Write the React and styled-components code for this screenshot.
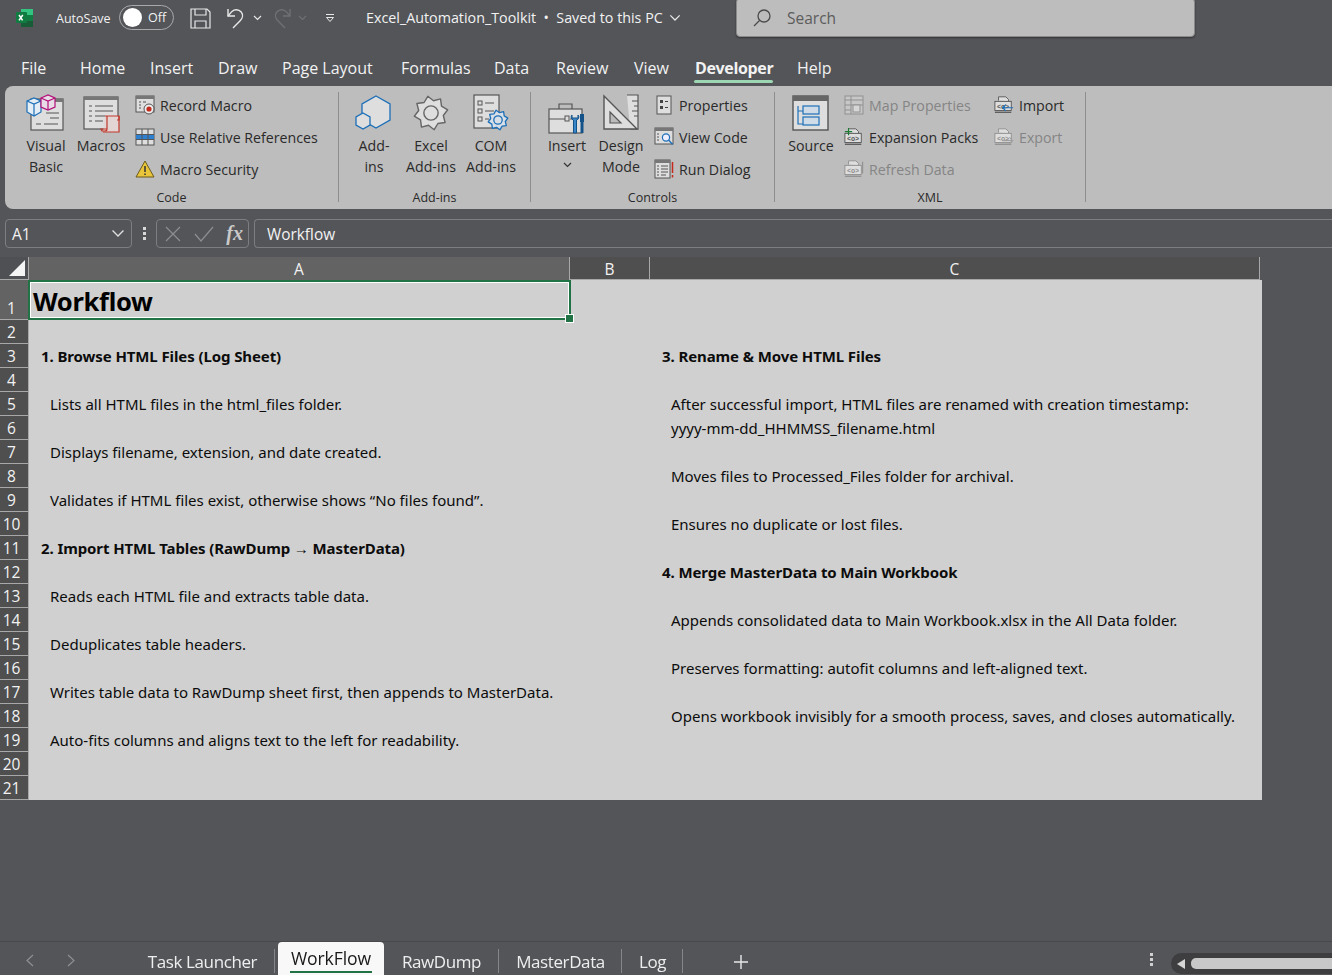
import React from "react";
import styled, { createGlobalStyle } from "styled-components";

const UI = '"Open Sans", "Noto Sans", sans-serif';
const CELL = '"Noto Sans", "Open Sans", sans-serif';

const Global = createGlobalStyle`
  html, body { margin: 0; padding: 0; background: #535559; }
  body { width: 1332px; height: 975px; overflow: hidden; font-family: ${UI}; }
  * { box-sizing: border-box; }
`;

// icons
const Stroke = "#555";
const Fill = "#dedede";
const Blue = "#1c6fb8";

const Svg = ({ s = 16, w, h, children, vb }) => (
  <svg width={w || s} height={h || s} viewBox={vb || `0 0 ${w || s} ${h || s}`} fill="none">
    {children}
  </svg>
);

const ExcelLogo = () => (
  <Svg w={20} h={20}>
    <path d="M6 1h10a2 2 0 0 1 2 2v14a2 2 0 0 1-2 2H6z" fill="#21a366" />
    <rect x="6" y="1" width="12" height="6" fill="#33c481" />
    <rect x="6" y="13" width="12" height="6" fill="#185c37" />
    <rect x="6" y="7" width="12" height="6" fill="#107c41" />
    <rect x="1" y="4" width="11" height="11" rx="1" fill="#107c41" />
    <path d="M4 7l3.6 5.4M7.8 7L4 12.4" stroke="#fff" strokeWidth="1.5" />
  </Svg>
);

const SaveIcon = () => (
  <Svg w={21} h={21}>
    <path d="M1 1h16l3 3v16H1z" stroke="#e8e8e8" strokeWidth="1.2" />
    <path d="M5 1v6h11V1M5 20v-7h11v7" stroke="#e8e8e8" strokeWidth="1.2" />
  </Svg>
);

const UndoIcon = ({ c = "#e8e8e8" }) => (
  <Svg w={20} h={22}>
    <path d="M2 2v7h7" stroke={c} strokeWidth="1.4" />
    <path d="M2 9l4-4.6a6.4 6.4 0 0 1 9 .4c2.6 3 1.4 6.6-.6 8.6L7 21" stroke={c} strokeWidth="1.4" />
  </Svg>
);

const RedoIcon = () => (
  <Svg w={20} h={22}>
    <g transform="translate(20 0) scale(-1 1)">
      <path d="M2 2v7h7" stroke="#6f7074" strokeWidth="1.4" />
      <path d="M2 9l4-4.6a6.4 6.4 0 0 1 9 .4c2.6 3 1.4 6.6-.6 8.6L7 21" stroke="#6f7074" strokeWidth="1.4" />
    </g>
  </Svg>
);

const Chevron = ({ c = "#e8e8e8", s = 9 }) => (
  <Svg w={s} h={s * 0.67} vb="0 0 9 6">
    <path d="M1 1l3.5 3.5L8 1" stroke={c} strokeWidth={9 / s + 0.2} />
  </Svg>
);

const QuickIcon = () => (
  <Svg w={10} h={10}>
    <path d="M1 1.5h8" stroke="#e8e8e8" />
    <path d="M1.5 4.5L5 8.5l3.5-4z" stroke="#e8e8e8" />
  </Svg>
);

const SearchGlass = () => (
  <Svg w={20} h={20}>
    <circle cx="12" cy="8" r="6" stroke="#4a4a4a" strokeWidth="1.3" />
    <path d="M7.5 12.5L2 18" stroke="#4a4a4a" strokeWidth="1.3" />
  </Svg>
);

const VisualBasicIcon = () => (
  <Svg w={40} h={38}>
    <rect x="5" y="5" width="32" height="31" fill={Fill} stroke={Stroke} strokeWidth="1.2" />
    <rect x="5" y="5" width="32" height="3" fill="#777" />
    <path d="M20 19h13M24 24h9M10 30h5M18 30h14" stroke={Stroke} strokeWidth="1.2" />
    <path d="M1 7l7-3 7 3v11l-7 4-7-4z" fill="#e6eef5" stroke={Blue} strokeWidth="1.2" />
    <path d="M1 7l7 3 7-3M8 10v12" stroke={Blue} strokeWidth="1.2" />
    <path d="M15 4l7-3 7 3v9l-7 3-7-3z" fill="#e8dde6" stroke="#b3107a" strokeWidth="1.2" />
    <path d="M15 4l7 3 7-3M22 7v9" stroke="#b3107a" strokeWidth="1.2" />
  </Svg>
);

const MacrosIcon = () => (
  <Svg w={40} h={40}>
    <g transform="translate(2 3)">
      <rect x="1" y="1" width="34" height="32" fill={Fill} stroke={Stroke} strokeWidth="1.2" />
      <rect x="1" y="1" width="34" height="3" fill="#777" />
      <path d="M6 10h3M12 10h18M6 15h3M12 15h18M6 20h3M12 20h10M6 25h3M12 25h8" stroke={Stroke} strokeWidth="1.2" />
      <path d="M22 20h14v16H20" fill="#e4d5d5" stroke="#c0392b" strokeWidth="1.2" />
      <path d="M24 20v13a2 2 0 0 1-2 2h-3l-1-2h6M36 20v4h-2" stroke="#c0392b" strokeWidth="1.2" />
    </g>
  </Svg>
);

const RecordIcon = () => (
  <Svg w={20} h={20}>
    <rect x="1" y="1" width="18" height="16" fill={Fill} stroke={Stroke} />
    <rect x="1" y="1" width="18" height="3" fill="#777" />
    <path d="M4 7h2M4 10h2M4 13h2M8 7h3" stroke={Stroke} />
    <circle cx="14" cy="14" r="5" fill="#eee" stroke={Stroke} />
    <circle cx="14" cy="14" r="2.6" fill="#c42b1c" />
  </Svg>
);

const RelativeIcon = () => (
  <Svg w={20} h={18}>
    <rect x="1" y="1" width="18" height="16" fill={Fill} stroke={Stroke} />
    <rect x="1" y="6.5" width="18" height="5" fill="#2f7fd0" />
    <path d="M7 1v16M13 1v16M1 6.5h18M1 11.5h18" stroke={Stroke} />
  </Svg>
);

const WarningIcon = () => (
  <Svg w={20} h={18}>
    <path d="M10 1l9 16H1z" fill="#e8c53a" stroke="#6b5a1c" />
    <path d="M10 6v6M10 13.5v1.6" stroke="#333" strokeWidth="1.5" />
  </Svg>
);

const AddinsIcon = () => (
  <Svg w={38} h={38}>
    <path d="M21 2l14 8v16l-14 8-14-8V10z" fill="#dedede" stroke={Blue} strokeWidth="1.3" />
    <path d="M8 19l7 4v8l-7 4-7-4v-8z" fill="#dedede" stroke={Blue} strokeWidth="1.3" />
  </Svg>
);

const GearPath = ({ cx, cy, r, color, width = 1.3, fill = Fill }) => {
  const pts = [];
  for (let i = 0; i < 16; i++) {
    const rr = i % 2 === 0 ? r : r * 0.74;
    const a = ((i * 22.5 - 11) * Math.PI) / 180;
    pts.push(`${(cx + rr * Math.cos(a)).toFixed(1)},${(cy + rr * Math.sin(a)).toFixed(1)}`);
  }
  return (
    <>
      <polygon points={pts.join(" ")} fill={fill} stroke={color} strokeWidth={width} strokeLinejoin="round" />
      <circle cx={cx} cy={cy} r={r * 0.42} fill="none" stroke={color} strokeWidth={width} />
    </>
  );
};

const ExcelAddinsIcon = () => (
  <Svg w={38} h={38}>
    <GearPath cx={19} cy={19} r={17} color="#666" width={1.4} />
  </Svg>
);

const ComAddinsIcon = () => (
  <Svg w={36} h={38}>
    <rect x="1" y="1" width="25" height="33" fill={Fill} stroke={Stroke} strokeWidth="1.2" />
    <rect x="5" y="7" width="4" height="4" stroke={Stroke} />
    <rect x="5" y="15" width="4" height="4" stroke={Stroke} />
    <rect x="5" y="23" width="4" height="4" stroke={Stroke} />
    <path d="M12 9h9M12 17h9M12 25h4" stroke={Stroke} />
    <GearPath cx={25} cy={26} r={10} color={Blue} width={1.3} fill="#d8dfe6" />
  </Svg>
);

const InsertIcon = () => (
  <Svg w={38} h={42}>
    <g transform="translate(0 9)">
      <rect x="1" y="8" width="33" height="24" fill={Fill} stroke={Stroke} strokeWidth="1.2" />
      <path d="M11 8V3h13v5" stroke={Stroke} strokeWidth="1.2" />
      <path d="M1 18h16M22 18h3" stroke={Stroke} />
      <rect x="17" y="15" width="4" height="5" fill={Fill} stroke={Stroke} />
      <path d="M24 14a3 3 0 0 0 1.5 5v13h3V19a3 3 0 0 0 1.5-5v3h-6z" fill="#3a86c8" stroke="#14538a" />
      <rect x="32" y="13" width="4" height="8" fill="#14538a" />
      <path d="M34 21v11" stroke="#14538a" strokeWidth="3" />
    </g>
  </Svg>
);

const DesignIcon = () => (
  <Svg w={36} h={38}>
    <path d="M24 1h11v34h-8" fill={Fill} stroke={Stroke} strokeWidth="1.2" />
    <path d="M29 7h6M31 12h4M29 17h6M31 22h4" stroke={Stroke} />
    <path d="M1 2l33 33H1z" fill={Fill} stroke={Stroke} strokeWidth="1.4" />
    <path d="M7 18l11 11H7z" fill="#bbb" stroke={Stroke} strokeWidth="1.2" />
  </Svg>
);

const PropertiesIcon = () => (
  <Svg w={16} h={20}>
    <rect x="1" y="1" width="14" height="18" fill={Fill} stroke={Stroke} />
    <rect x="4" y="5" width="3" height="3" fill="#444" />
    <rect x="4" y="11" width="3" height="3" fill="#444" />
    <path d="M9 6.5h3M9 12.5h3" stroke="#444" />
  </Svg>
);

const ViewCodeIcon = () => (
  <Svg w={20} h={20}>
    <rect x="1" y="1" width="18" height="16" fill={Fill} stroke={Stroke} />
    <rect x="1" y="1" width="18" height="3" fill="#777" />
    <path d="M3 7h2M3 10h2M3 13h2" stroke={Stroke} />
    <circle cx="12" cy="10.5" r="3.6" fill="#eef" stroke={Blue} strokeWidth="1.2" />
    <path d="M14.6 13l4 4.5" stroke={Blue} strokeWidth="1.4" />
  </Svg>
);

const RunDialogIcon = () => (
  <Svg w={20} h={20}>
    <rect x="1" y="1" width="15" height="18" fill={Fill} stroke={Stroke} />
    <rect x="1" y="1" width="15" height="3" fill="#777" />
    <path d="M3 7h2M7 7h7M3 10h2M7 10h7M3 13h2M7 13h7M3 16h2M7 16h5" stroke={Stroke} />
    <path d="M18.5 3v11M18.5 16v2.4" stroke="#c42b1c" strokeWidth="1.5" />
  </Svg>
);

const SourceIcon = () => (
  <Svg w={38} h={36}>
    <rect x="1" y="1" width="35" height="34" fill={Fill} stroke={Stroke} strokeWidth="1.4" />
    <rect x="1" y="1" width="35" height="5" fill="#666" />
    <path d="M6 11v18h5M6 16h5" stroke={Blue} strokeWidth="1.2" />
    <rect x="11" y="11" width="16" height="8" fill="#cfdbe6" stroke={Blue} strokeWidth="1.2" />
    <rect x="11" y="22" width="16" height="8" fill="#cfdbe6" stroke={Blue} strokeWidth="1.2" />
  </Svg>
);

const MapPropsIcon = () => (
  <Svg w={20} h={20}>
    <g stroke="#8f8f8f" opacity="0.95">
      <rect x="1" y="1" width="18" height="18" fill="#c8c8c8" />
      <path d="M1 5h18M7 1v18M1 10h18M1 15h6" />
      <rect x="9" y="10" width="7" height="7" fill="#d8d8d8" />
    </g>
  </Svg>
);

const XmlDoc = ({ c = "#555", extra, children }) => (
  <Svg w={22} h={20}>
    <path d="M5 5V1h8l3 3v2" stroke={c} fill={Fill} />
    <rect x="1" y="6" width="18" height="10" fill={Fill} stroke={c} />
    <path d="M1 18h18" stroke={c} strokeWidth="1.4" />
    <text x="10" y="14" textAnchor="middle" fontSize="7.5" fontWeight="700" fontFamily="Liberation Mono, monospace" fill={c}>{"<o>"}</text>
    {extra}
    {children}
  </Svg>
);

const XmlExpansion = () => (
  <XmlDoc extra={<path d="M5 0v8M1 4h8" stroke="#1c7a33" strokeWidth="1.3" />} />
);
const XmlRefresh = () => (
  <XmlDoc c="#8f8f8f" extra={<path d="M20.5 2v13" stroke="#8f8f8f" strokeWidth="1.2" />} />
);
const XmlImport = () => (
  <XmlDoc extra={<path d="M21 13H10M13 9.5L9.5 13l3.5 3.5" stroke={Blue} strokeWidth="1.3" />} />
);
const XmlExport = () => (
  <XmlDoc c="#8f8f8f" extra={<path d="M9 14h11M17 10.5l3.5 3.5-3.5 3.5" stroke="#9f9f9f" strokeWidth="1.3" />} />
);

// title bar
const TitleBar = styled.div`
  height: 48px;
  display: flex;
  align-items: flex-start;
  color: #f2f2f2;
  position: relative;
`;

const LogoSlot = styled.div`
  width: 56px;
  padding: 8px 0 0 15px;
`;

const AutoSave = styled.span`
  font-size: 12.5px;
  line-height: 16px;
  margin-top: 11px;
  width: 63px;
`;

const Toggle = styled.div`
  width: 55px;
  height: 25px;
  margin-top: 5px;
  border: 1px solid #a9a9a9;
  border-radius: 13px;
  display: flex;
  align-items: center;
  padding-left: 3px;
  font-size: 12.5px;
  gap: 6px;
  &::before {
    content: "";
    width: 19px;
    height: 19px;
    border-radius: 50%;
    background: #fff;
  }
`;

const QuickSlot = styled.div`
  display: flex;
  align-items: center;
  height: 20px;
  margin-top: 8px;
  margin-left: ${(p) => p.$ml}px;
`;

const DocTitle = styled.div`
  margin-left: 31px;
  margin-top: 9px;
  font-size: 14.3px;
  line-height: 18px;
  display: flex;
  align-items: center;
  gap: 6px;
  white-space: nowrap;
`;

const SearchBox = styled.div`
  position: absolute;
  left: 736px;
  top: -2px;
  width: 459px;
  height: 39px;
  background: #bdbdbd;
  border: 1px solid #8a8a8a;
  border-radius: 4px;
  box-shadow: 0 1px 2px rgba(0, 0, 0, 0.4);
  display: flex;
  align-items: center;
  gap: 15px;
  padding: 0 0 0 15px;
  font-size: 15.5px;
  color: #5c5c5c;
`;

// tabs
const TabBar = styled.div`
  height: 38px;
  display: flex;
  padding-left: 21px;
  align-items: flex-start;
`;

const Tab = styled.div`
  width: ${(p) => p.$w}px;
  font-size: 16px;
  line-height: 21px;
  padding-top: 10px;
  color: #f2f2f2;
  white-space: nowrap;
  font-weight: ${(p) => (p.$active ? 700 : 400)};
  letter-spacing: ${(p) => (p.$active ? "-0.35px" : 0)};
  position: relative;
  ${(p) =>
    p.$active &&
    `&::after {
      content: "";
      position: absolute;
      left: -1px;
      top: 32px;
      width: 79px;
      height: 3px;
      border-radius: 2px;
      background: #9dd6b3;
    }`}
`;

// ribbon
const Ribbon = styled.div`
  margin-left: 5px;
  height: 123px;
  background: #bdbdbd;
  border-radius: 8px 0 0 8px;
  display: flex;
  color: #2a2a2a;
  padding: 6px 0 0;
`;

const Group = styled.div`
  width: ${(p) => p.$w}px;
  height: 110px;
  position: relative;
  display: flex;
  align-items: flex-start;
  padding-left: ${(p) => p.$pl}px;
  border-right: 1px solid #8e8e8e;
`;

const GroupName = styled.div`
  position: absolute;
  left: 0;
  right: 0;
  top: 99px;
  text-align: center;
  font-size: 12.5px;
  line-height: 14px;
`;

const Large = styled.div`
  width: ${(p) => p.$w}px;
  display: flex;
  flex-direction: column;
  align-items: center;
  font-size: 14.2px;
  line-height: 21px;
  text-align: center;
  white-space: nowrap;
`;

const LargeIcon = styled.div`
  height: 42px;
  display: flex;
  align-items: center;
  justify-content: center;
  margin-bottom: 1px;
`;

const DropMark = styled.div`
  margin-top: 6px;
  line-height: 0;
`;

const SmallCol = styled.div`
  width: ${(p) => p.$w}px;
  margin-top: -3px;
  margin-left: ${(p) => p.$ml || 0}px;
  display: flex;
  flex-direction: column;
`;

const Small = styled.div`
  height: 32px;
  display: flex;
  align-items: center;
  gap: 5px;
  font-size: 14.2px;
  white-space: nowrap;
  color: ${(p) => (p.$off ? "#858585" : "#2a2a2a")};
`;

const SmallIcon = styled.div`
  width: 20px;
  display: flex;
  justify-content: center;
`;

// formula bar
const FormulaBar = styled.div`
  display: flex;
  align-items: center;
  height: 29px;
  margin-top: 10px;
  padding-left: 5px;
  gap: 8px;
  color: #f2f2f2;
`;

const NameBox = styled.div`
  width: 127px;
  height: 29px;
  border: 1px solid #7d7e82;
  border-radius: 4px;
  padding: 1px 6px 0;
  display: flex;
  align-items: center;
  justify-content: space-between;
  font-size: 15.5px;
`;

const Dots = styled.div`
  width: 8px;
  display: flex;
  flex-direction: column;
  align-items: center;
  gap: 2px;
  span {
    width: 3px;
    height: 3px;
    background: ${(p) => p.$c || "#d8d8d8"};
  }
`;

const FxBox = styled.div`
  width: 93px;
  height: 29px;
  border: 1px solid #7d7e82;
  border-radius: 4px;
  display: flex;
  align-items: center;
  justify-content: space-between;
  padding: 0 5px 0 8px;
`;

const Fx = styled.span`
  font-family: "Liberation Serif", serif;
  font-style: italic;
  font-weight: 700;
  font-size: 20px;
  color: #c9c9c9;
`;

const FormulaInput = styled.div`
  flex: 1;
  height: 29px;
  border: 1px solid #7d7e82;
  border-right: none;
  border-radius: 4px 0 0 4px;
  margin-left: -3px;
  padding: 1px 0 0 12px;
  display: flex;
  align-items: center;
  font-size: 15.4px;
`;

// sheet
const Sheet = styled.div`
  margin-top: 9px;
  display: grid;
  grid-template-columns: 29px 541px 80px 612px;
  grid-template-rows: 23px 40px repeat(20, 24px);
  width: 1262px;
`;

const Corner = styled.div`
  background: #4f5054;
  border-right: 1px solid #a8a8a8;
  border-bottom: 1px solid #a8a8a8;
  position: relative;
  &::after {
    content: "";
    position: absolute;
    right: 3px;
    bottom: 3px;
    border-style: solid;
    border-width: 0 0 16px 16px;
    border-color: transparent transparent #f4f4f4 transparent;
  }
`;

const ColHead = styled.div`
  background: ${(p) => (p.$active ? "#636363" : "#4f4f4f")};
  border-right: 1px solid #a8a8a8;
  border-bottom: ${(p) => (p.$active ? "0" : "1px solid #a8a8a8")};
  margin-right: ${(p) => p.$mr || 0}px;
  color: #f2f2f2;
  font-size: 15.5px;
  text-align: center;
  line-height: 24px;
`;

const RowHead = styled.div`
  background: ${(p) => (p.$active ? "#636363" : "#4f4f4f")};
  border-bottom: 1px solid #a8a8a8;
  border-right: 1px solid #a8a8a8;
  color: #f2f2f2;
  font-size: 15.5px;
  line-height: 22px;
  display: flex;
  align-items: flex-end;
  justify-content: center;
  padding-right: 5px;
`;

const Cell = styled.div`
  background: #d0d0d0;
  color: #0c0c0c;
  font-family: ${CELL};
  font-size: 15px;
  letter-spacing: ${(p) => (p.$head ? "-0.1px" : 0)};
  line-height: 23px;
  padding-top: 1px;
  white-space: nowrap;
  font-weight: ${(p) => (p.$head ? 700 : 400)};
  padding-left: ${(p) => (p.$head ? 12 : 21)}px;
`;

const TitleCell = styled.div`
  background: #d0d0d0;
  border: 2px solid #217346;
  outline: 1px solid #fff;
  outline-offset: -3px;
  margin: 0 -1px 0 -1px;
  color: #000;
  font-family: ${CELL};
  font-weight: 700;
  font-size: 25.5px;
  letter-spacing: -0.3px;
  line-height: 38px;
  padding-left: 3px;
  position: relative;
  z-index: 1;
  &::after {
    content: "";
    position: absolute;
    right: -5px;
    bottom: -5px;
    width: 7px;
    height: 7px;
    background: #217346;
    border: 1px solid #fff;
  }
`;

const Spacer = styled.div`
  background: #d0d0d0;
`;

// bottom bar
const BottomBar = styled.div`
  position: fixed;
  left: 0;
  right: 0;
  top: 941px;
  height: 34px;
  border-top: 1px solid #47484c;
  display: flex;
  align-items: flex-start;
  color: #e8e8e8;
`;

const NavArrows = styled.div`
  width: 137px;
  display: flex;
  gap: 33px;
  padding: 12px 0 0 26px;
`;

const SheetTab = styled.div`
  width: ${(p) => p.$w}px;
  height: 34px;
  margin-left: ${(p) => p.$ml || 0}px;
  padding-right: ${(p) => p.$pr || 0}px;
  font-size: ${(p) => (p.$active ? 17.6 : 17)}px;
  letter-spacing: ${(p) => (p.$active ? "-0.1px" : "-0.4px")};
  line-height: 24px;
  padding-top: ${(p) => (p.$active ? 4 : 8)}px;
  text-align: center;
  color: ${(p) => (p.$active ? "#1a1a1a" : "#eeeeee")};
  background: ${(p) => (p.$active ? "#f8f8f8" : "transparent")};
  border-radius: ${(p) => (p.$active ? "4px 4px 0 0" : 0)};
  position: relative;
  white-space: nowrap;
  ${(p) =>
    p.$sep &&
    `&::after {
      content: "";
      position: absolute;
      right: 0;
      top: 7px;
      height: 24px;
      width: 1px;
      background: #85868a;
    }`}
  ${(p) =>
    p.$active &&
    `&::before {
      content: "";
      position: absolute;
      left: 12px;
      right: 12px;
      top: 29px;
      height: 2px;
      background: #217346;
    }`}
`;

const PlusSlot = styled.div`
  margin-left: 51px;
  padding-top: 10px;
`;

const ScrollArea = styled.div`
  margin-left: auto;
  display: flex;
  align-items: flex-start;
  padding-top: 11px;
  gap: 16px;
`;

const ScrollTrack = styled.div`
  width: 161px;
  height: 21px;
  background: #3e3e41;
  border-radius: 11px 0 0 11px;
  display: flex;
  align-items: center;
  padding-left: 6px;
  gap: 6px;
  &::before {
    content: "";
    border-style: solid;
    border-width: 5px 8px 5px 0;
    border-color: transparent #d6d6d6 transparent transparent;
  }
  &::after {
    content: "";
    flex: 1;
    height: 11px;
    background: #c8c8c8;
    border-radius: 5px 0 0 5px;
  }
`;

const leftRows = {
  3: ["1. Browse HTML Files (Log Sheet)", true],
  5: ["Lists all HTML files in the html_files folder."],
  7: ["Displays filename, extension, and date created."],
  9: ["Validates if HTML files exist, otherwise shows “No files found”."],
  11: ["2. Import HTML Tables (RawDump → MasterData)", true],
  13: ["Reads each HTML file and extracts table data."],
  15: ["Deduplicates table headers."],
  17: ["Writes table data to RawDump sheet first, then appends to MasterData."],
  19: ["Auto-fits columns and aligns text to the left for readability."],
};

const rightRows = {
  3: ["3. Rename & Move HTML Files", true],
  5: ["After successful import, HTML files are renamed with creation timestamp:"],
  6: ["yyyy-mm-dd_HHMMSS_filename.html"],
  8: ["Moves files to Processed_Files folder for archival."],
  10: ["Ensures no duplicate or lost files."],
  12: ["4. Merge MasterData to Main Workbook", true],
  14: ["Appends consolidated data to Main Workbook.xlsx in the All Data folder."],
  16: ["Preserves formatting: autofit columns and left-aligned text."],
  18: ["Opens workbook invisibly for a smooth process, saves, and closes automatically."],
};

const rowNumbers = Array.from({ length: 20 }, (_, i) => i + 2);

const ribbonTabs = [
  ["File", 59],
  ["Home", 70],
  ["Insert", 68],
  ["Draw", 64],
  ["Page Layout", 119],
  ["Formulas", 93],
  ["Data", 62],
  ["Review", 78],
  ["View", 61],
  ["Developer", 102, true],
  ["Help", 40],
];

const X = () => (
  <Svg w={16} h={16}>
    <path d="M1 1l14 14M15 1L1 15" stroke="#8d8e92" strokeWidth="1.2" />
  </Svg>
);

const Check = () => (
  <Svg w={20} h={16}>
    <path d="M1 8l6 7L19 1" stroke="#8d8e92" strokeWidth="1.2" />
  </Svg>
);

const Plus = () => (
  <Svg w={14} h={14}>
    <path d="M7 0v14M0 7h14" stroke="#e8e8e8" strokeWidth="1.4" />
  </Svg>
);

const NavArrow = ({ flip }) => (
  <Svg w={8} h={13}>
    <path d={flip ? "M1 1l6 5.5L1 12" : "M7 1L1 6.5 7 12"} stroke="#8f9094" strokeWidth="1.2" />
  </Svg>
);

const App = () => {
  return (
    <>
      <Global />
      <TitleBar>
        <LogoSlot>
          <ExcelLogo />
        </LogoSlot>
        <AutoSave>AutoSave</AutoSave>
        <Toggle>Off</Toggle>
        <QuickSlot $ml={16}>
          <SaveIcon />
        </QuickSlot>
        <QuickSlot $ml={15}>
          <UndoIcon />
        </QuickSlot>
        <QuickSlot $ml={7}>
          <Chevron />
        </QuickSlot>
        <QuickSlot $ml={10}>
          <RedoIcon />
        </QuickSlot>
        <QuickSlot $ml={6}>
          <Chevron c="#6f7074" />
        </QuickSlot>
        <QuickSlot $ml={18}>
          <QuickIcon />
        </QuickSlot>
        <DocTitle>
          Excel_Automation_Toolkit&nbsp;&nbsp;•&nbsp;&nbsp;Saved to this PC <Chevron s={12} />
        </DocTitle>
        <SearchBox>
          <SearchGlass />
          Search
        </SearchBox>
      </TitleBar>

      <TabBar>
        {ribbonTabs.map(([name, w, active]) => (
          <Tab key={name} $w={w} $active={active}>
            {name}
          </Tab>
        ))}
      </TabBar>

      <Ribbon>
        <Group $w={334} $pl={13}>
          <Large $w={56}>
            <LargeIcon><VisualBasicIcon /></LargeIcon>
            Visual<br />Basic
          </Large>
          <Large $w={54}>
            <LargeIcon><MacrosIcon /></LargeIcon>
            Macros
          </Large>
          <SmallCol $w={200} $ml={7}>
            <Small><SmallIcon><RecordIcon /></SmallIcon>Record Macro</Small>
            <Small><SmallIcon><RelativeIcon /></SmallIcon>Use Relative References</Small>
            <Small><SmallIcon><WarningIcon /></SmallIcon>Macro Security</Small>
          </SmallCol>
          <GroupName>Code</GroupName>
        </Group>
        <Group $w={192} $pl={8}>
          <Large $w={54}>
            <LargeIcon><AddinsIcon /></LargeIcon>
            Add-<br />ins
          </Large>
          <Large $w={60}>
            <LargeIcon><ExcelAddinsIcon /></LargeIcon>
            Excel<br />Add-ins
          </Large>
          <Large $w={60}>
            <LargeIcon><ComAddinsIcon /></LargeIcon>
            COM<br />Add-ins
          </Large>
          <GroupName>Add-ins</GroupName>
        </Group>
        <Group $w={244} $pl={9}>
          <Large $w={54}>
            <LargeIcon><InsertIcon /></LargeIcon>
            Insert
            <DropMark><Chevron c="#333" /></DropMark>
          </Large>
          <Large $w={54}>
            <LargeIcon><DesignIcon /></LargeIcon>
            Design<br />Mode
          </Large>
          <SmallCol $w={110} $ml={6}>
            <Small><SmallIcon><PropertiesIcon /></SmallIcon>Properties</Small>
            <Small><SmallIcon><ViewCodeIcon /></SmallIcon>View Code</Small>
            <Small><SmallIcon><RunDialogIcon /></SmallIcon>Run Dialog</Small>
          </SmallCol>
          <GroupName>Controls</GroupName>
        </Group>
        <Group $w={311} $pl={12}>
          <Large $w={48}>
            <LargeIcon><SourceIcon /></LargeIcon>
            Source
          </Large>
          <SmallCol $w={150} $ml={9}>
            <Small $off><SmallIcon><MapPropsIcon /></SmallIcon>Map Properties</Small>
            <Small><SmallIcon><XmlExpansion /></SmallIcon>Expansion Packs</Small>
            <Small $off><SmallIcon><XmlRefresh /></SmallIcon>Refresh Data</Small>
          </SmallCol>
          <SmallCol $w={80}>
            <Small><SmallIcon><XmlImport /></SmallIcon>Import</Small>
            <Small $off><SmallIcon><XmlExport /></SmallIcon>Export</Small>
          </SmallCol>
          <GroupName>XML</GroupName>
        </Group>
      </Ribbon>

      <FormulaBar>
        <NameBox>
          A1
          <Chevron c="#e0e0e0" s={14} />
        </NameBox>
        <Dots><span /><span /><span /></Dots>
        <FxBox>
          <X />
          <Check />
          <Fx>fx</Fx>
        </FxBox>
        <FormulaInput>Workflow</FormulaInput>
      </FormulaBar>

      <Sheet>
        <Corner />
        <ColHead $active>A</ColHead>
        <ColHead>B</ColHead>
        <ColHead $mr={2}>C</ColHead>
        <RowHead $active>1</RowHead>
        <TitleCell>Workflow</TitleCell>
        <Spacer />
        <Spacer />
        {rowNumbers.map((n) => {
          const left = leftRows[n];
          const right = rightRows[n];
          return (
            <React.Fragment key={n}>
              <RowHead>{n}</RowHead>
              <Cell $head={left && left[1]}>{left && left[0]}</Cell>
              <Spacer />
              <Cell $head={right && right[1]}>{right && right[0]}</Cell>
            </React.Fragment>
          );
        })}
      </Sheet>

      <BottomBar>
        <NavArrows>
          <NavArrow />
          <NavArrow flip />
        </NavArrows>
        <SheetTab $w={138} $sep $pr={7}>Task Launcher</SheetTab>
        <SheetTab $w={106} $ml={3} $active>WorkFlow</SheetTab>
        <SheetTab $w={115} $sep>RawDump</SheetTab>
        <SheetTab $w={123} $sep>MasterData</SheetTab>
        <SheetTab $w={61} $sep>Log</SheetTab>
        <PlusSlot><Plus /></PlusSlot>
        <ScrollArea>
          <Dots $c="#d0d0d0"><span /><span /><span /></Dots>
          <ScrollTrack />
        </ScrollArea>
      </BottomBar>
    </>
  );
};

export default App;
